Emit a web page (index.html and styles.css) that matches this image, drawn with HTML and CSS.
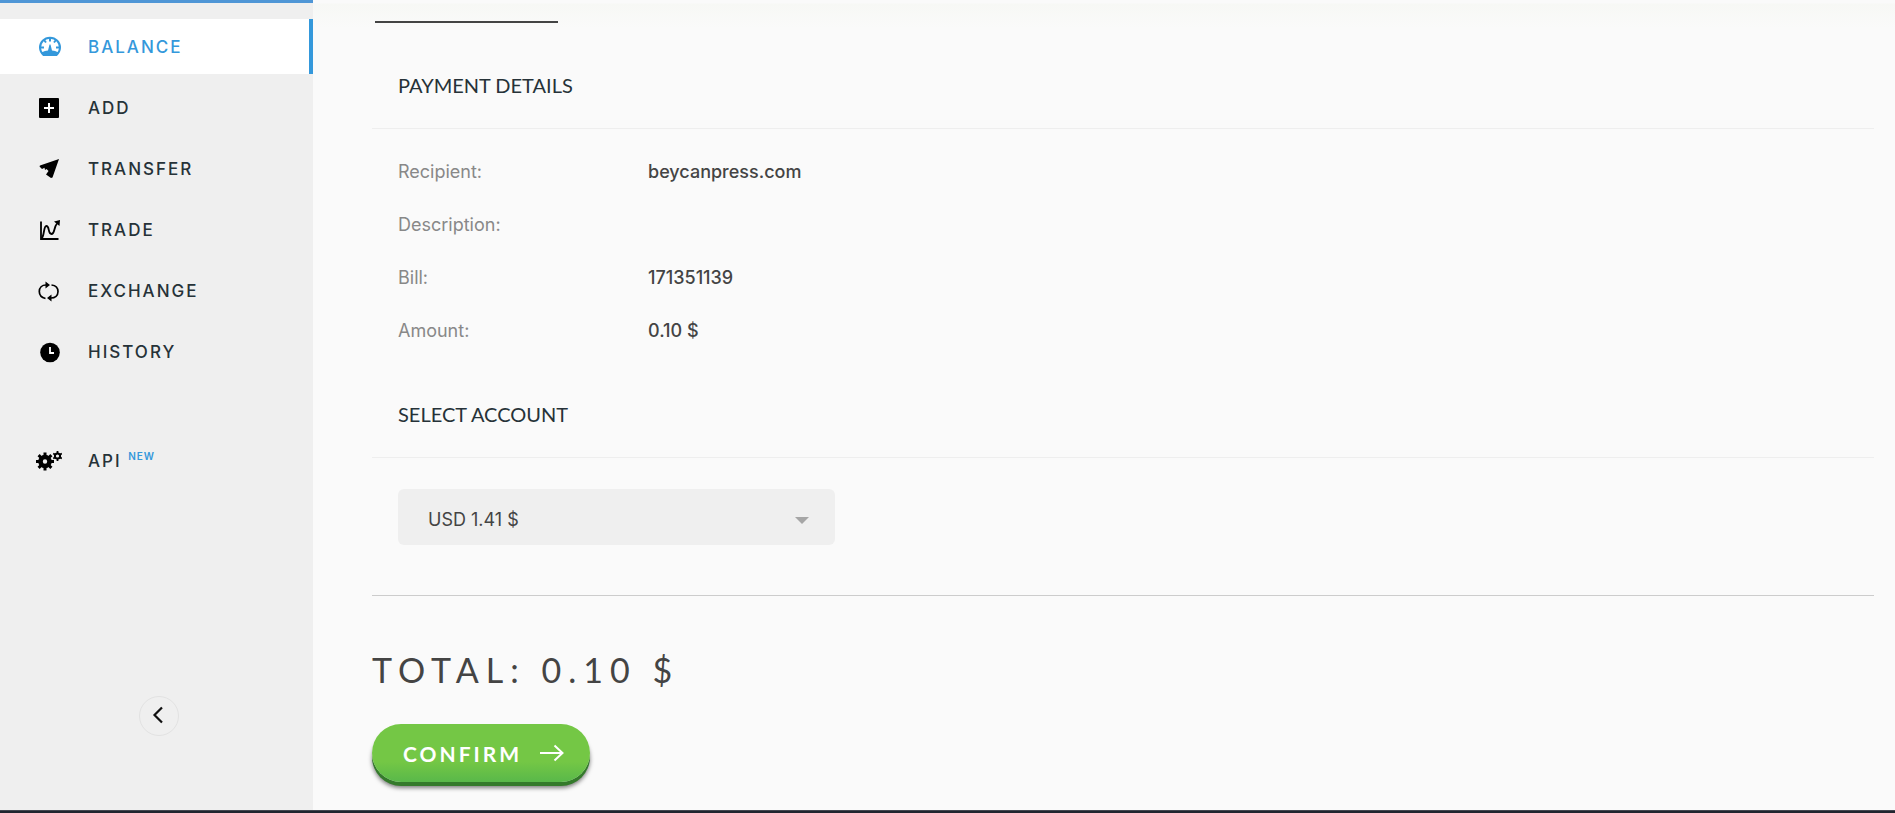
FILE: index.html
```html
<!DOCTYPE html>
<html lang="en">
<head>
    <meta charset="UTF-8">
    <meta name="viewport" content="width=device-width, initial-scale=1.0">
    <title>Payment</title>
    <link rel="stylesheet" href="styles.css">
</head>
<body>
    <div class="layout">
        <aside class="sidebar">
            <nav class="menu">
                <a href="#" class="menu-item active">
                    <svg class="icon" viewBox="0 0 24 24">
                        <path d="M5.5 20 A10 9.800 0 1 1 18.500 20 Z" fill="none" stroke="currentColor" stroke-width="2"/>
                        <path d="M3.500 17.500 Q7 15.500 10 15.500 L11.500 9.500 H12.500 L14 15.500 Q17 15.500 20.500 17.500 L18.500 21 H5.500 Z" fill="currentColor"/>
                        <path d="M12 2.500 V6.500 M6 5 L8 7.500 M18 5 L16 7.500 M2 12.500 H6 M22 12.500 H18" stroke="currentColor" stroke-width="2"/>
                    </svg>
                    <span>BALANCE</span>
                </a>
                <a href="#" class="menu-item">
                    <svg class="icon" viewBox="0 0 24 24">
                        <rect x="1" y="2" width="20" height="20" rx="1" fill="currentColor"/>
                        <path d="M11 7 V17 M6 12 H16" stroke="#fff" stroke-width="2"/>
                    </svg>
                    <span>ADD</span>
                </a>
                <a href="#" class="menu-item">
                    <svg class="icon" viewBox="0 0 24 24">
                        <path d="M21 2 L2 8.500 Q1 9 2 10 L4 12 L6.500 10.800 L7 13 L8.500 12 L10.500 14 L8 17.500 L13 21 L14.500 20.500 Z" fill="currentColor"/>
                    </svg>
                    <span>TRANSFER</span>
                </a>
                <a href="#" class="menu-item">
                    <svg class="icon" viewBox="0 0 24 24" fill="none" stroke="currentColor" stroke-width="1.800">
                        <path d="M3 3.500 V21 H20.500"/>
                        <path d="M3.500 20.500 C6.500 18 5.500 8 8.300 8 C12 8 9.500 16 13.500 16 C17 16 15.500 9.500 19 5.500"/>
                        <path d="M16 3.500 L22 2 L21.500 8 Z" fill="currentColor" stroke="none"/>
                    </svg>
                    <span>TRADE</span>
                </a>
                <a href="#" class="menu-item">
                    <svg class="icon" viewBox="0 0 24 24" fill="none" stroke="currentColor" stroke-width="1.700">
                        <path d="M7.500 19.500 C3.500 18.500 1.300 16 1.300 12.500 C1.300 8.500 4 6 8 6"/>
                        <path d="M13.500 6 C17.500 6.500 20 9 20 12.500 C20 16.500 17 19 13 19"/>
                        <path d="M7.500 2.500 L12 6 L7.500 9.500 Z M13.500 15.500 L9 19 L13.500 22.500 Z" fill="currentColor" stroke="none"/>
                    </svg>
                    <span>EXCHANGE</span>
                </a>
                <a href="#" class="menu-item">
                    <svg class="icon" viewBox="0 0 24 24">
                        <circle cx="12" cy="12.500" r="9.800" fill="currentColor"/>
                        <path d="M12 7 V13 H16" fill="none" stroke="#fff" stroke-width="1.800"/>
                    </svg>
                    <span>HISTORY</span>
                </a>
                <a href="#" class="menu-item menu-api">
                    <svg class="icon icon-wide" viewBox="0 0 28 24">
                        <circle cx="11" cy="12.500" r="4.500" fill="none" stroke="currentColor" stroke-width="4.600"/>
                        <path d="M11 3.500 V7 M11 18 V21.500 M2 12.500 H6 M16 12.500 H20 M4.600 6.100 L7 8.500 M15 16.500 L17.400 18.900 M4.600 18.900 L7 16.500 M15 8.500 L17.400 6.100" stroke="currentColor" stroke-width="3"/>
                        <circle cx="23.500" cy="7" r="2.600" fill="none" stroke="currentColor" stroke-width="2"/>
                        <path d="M23.500 2 V4 M23.500 10 V12 M19.200 4.500 L21 5.500 M26 8.500 L27.800 9.500 M19.200 9.500 L21 8.500 M26 5.500 L27.800 4.500" stroke="currentColor" stroke-width="1.800"/>
                    </svg>
                    <span>API <sup class="badge">NEW</sup></span>
                </a>
            </nav>
            <button type="button" class="collapse" aria-label="Collapse menu">
                <svg width="12" height="20" viewBox="0 0 12 20"><path d="M10 2.500 L2.500 10 L10 17.500" fill="none" stroke="#111" stroke-width="2.200"/></svg>
            </button>
        </aside>

        <main class="content">
            <div class="tab-line"></div>
            <form>
                <h2 class="section-title">PAYMENT DETAILS</h2>
                <dl class="details">
                    <dt>Recipient:</dt>
                    <dd>beycanpress.com</dd>
                    <dt>Description:</dt>
                    <dd></dd>
                    <dt>Bill:</dt>
                    <dd>171351139</dd>
                    <dt>Amount:</dt>
                    <dd>0.10 $</dd>
                </dl>

                <h2 class="section-title"><label for="account">SELECT ACCOUNT</label></h2>
                <div class="select-box">
                    <select id="account" name="account">
                        <option value="usd">USD 1.41 $</option>
                    </select>
                    <svg class="caret" width="14" height="7" viewBox="0 0 14 7"><path d="M0 0 H14 L7 7 Z" fill="#a6a6a6"/></svg>
                </div>

                <div class="summary">
                    <p class="total">TOTAL: 0.10 $</p>
                    <button type="submit" class="confirm">
                        <span>CONFIRM</span>
                        <svg width="24" height="18" viewBox="0 0 24 18"><path d="M0 9 H22 M14.500 1.500 L22.500 9 L14.500 16.500" fill="none" stroke="#fff" stroke-width="2"/></svg>
                    </button>
                </div>
            </form>
        </main>
    </div>
    <footer class="footer"></footer>
</body>
</html>
```

FILE: styles.css
```css
* {
    box-sizing: border-box;
}
body {
    font-family: Inter, "Liberation Sans", sans-serif;
    background-color: #fafafa;
    color: #444;
    margin: 0;
    min-height: 100vh;
    display: flex;
    flex-direction: column;
}
.layout {
    display: flex;
    flex: 1;
}

/* sidebar */
.sidebar {
    width: 313px;
    flex-shrink: 0;
    background: #efefef;
    border-top: 3px solid #4f96d6;
    padding: 16px 0 74px;
    display: flex;
    flex-direction: column;
}
.menu {
    display: flex;
    flex-direction: column;
    gap: 6px;
}
.menu-item {
    display: flex;
    align-items: center;
    gap: 26px;
    height: 55px;
    padding-left: 38px;
    border-right: 4px solid transparent;
    color: #263238;
    font-size: 17px;
    font-weight: 500;
    letter-spacing: 2px;
    text-decoration: none;
}
.menu-item.active {
    background: #fff;
    color: #3498db;
    border-right-color: #3498db;
}
.icon {
    width: 24px;
    height: 24px;
    color: #000;
    flex-shrink: 0;
}
.active .icon {
    color: #3498db;
}
.icon-wide {
    width: 28px;
    margin-left: -4px;
}
.menu-api {
    margin-top: 48px;
}
.badge {
    color: #3498db;
    font-size: 10px;
    font-weight: 600;
    letter-spacing: 1px;
    line-height: 1;
}
.collapse {
    width: 40px;
    height: 40px;
    margin: auto 0 0 139px;
    padding: 0 2px 2px 0;
    display: flex;
    align-items: center;
    justify-content: center;
    background: none;
    border: 1px solid #e2e2e2;
    border-radius: 50%;
    cursor: pointer;
}

/* content */
.content {
    flex: 1;
    padding: 3px 21px 24px 59px;
    background: linear-gradient(#fafafa 3px, #f7f8f5 4px, #fafafa 28px);
}
.tab-line {
    width: 183px;
    height: 2px;
    margin: 18px 0 5px 3px;
    background: #444;
}
.section-title {
    margin: 0;
    padding: 42px 26px 28px;
    border-bottom: 1px solid #eee;
    color: #263238;
    font-family: Lato, sans-serif;
    font-size: 20px;
    font-weight: 400;
    line-height: 30px;
}
.details {
    display: grid;
    grid-template-columns: 250px 1fr;
    grid-auto-rows: 53px;
    align-items: center;
    margin: 0;
    padding: 16px 26px 0;
    font-size: 18px;
}
.details dt {
    color: #888;
    font-weight: 400;
}
.details dd {
    margin: 0;
    font-weight: 500;
}
.select-box {
    position: relative;
    max-width: 437px;
    margin: 31px 0 50px 26px;
}
.select-box select {
    display: block;
    width: 100%;
    height: 56px;
    padding: 4px 30px 0;
    appearance: none;
    background: #efefef;
    border: none;
    border-radius: 6px;
    color: #444;
    font-family: inherit;
    font-size: 18px;
}
.caret {
    position: absolute;
    top: 28px;
    right: 26px;
    pointer-events: none;
}
.summary {
    border-top: 1px solid #ccc;
    padding-top: 52px;
}
.total {
    margin: 0 0 32px;
    font-family: Lato, sans-serif;
    font-size: 34px;
    line-height: 44px;
    letter-spacing: 7px;
}
.confirm {
    display: flex;
    align-items: center;
    gap: 18px;
    height: 58px;
    padding: 0 26px 0 31px;
    background: linear-gradient(#74c745 65%, #59b84a);
    border: none;
    border-radius: 29px;
    box-shadow: 0 4px 0 #347a2b, 0 6px 4px rgba(0, 0, 0, 0.5);
    color: #fff;
    font-family: Lato, sans-serif;
    font-size: 21px;
    font-weight: 700;
    letter-spacing: 3px;
    cursor: pointer;
}
.footer {
    height: 3px;
    background: #20252f;
    border-top: 1px solid #444750;
}
```
